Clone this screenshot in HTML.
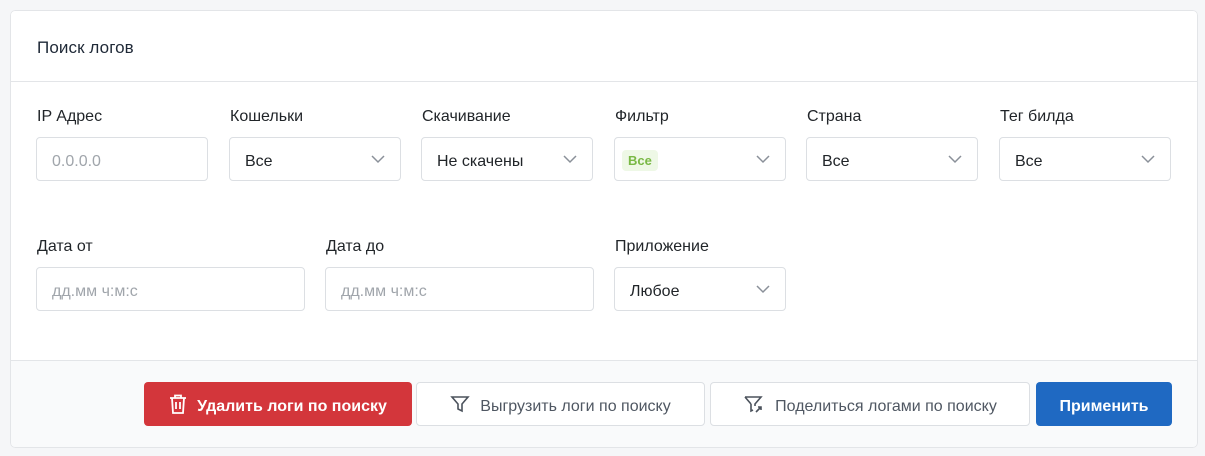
<!DOCTYPE html>
<html><head><meta charset="utf-8"><style>
*{box-sizing:border-box;margin:0;padding:0}
body{width:1205px;height:456px;background:#f5f6f8;font-family:"Liberation Sans",sans-serif;position:relative;overflow:hidden}
.card{position:absolute;left:10px;top:10px;width:1188px;height:438px;background:#fff;border-radius:5px;overflow:hidden}
.bd{position:absolute;inset:0;border:1px solid #e3e5e8;border-radius:5px;pointer-events:none;z-index:5}
.hd{position:absolute;left:0;top:0;right:0;height:72px;border-bottom:1px solid #e3e5e8}
.hd span{position:absolute;left:27px;top:28px;font-size:17px;color:#1f2937;letter-spacing:.1px}
.lbl{position:absolute;font-size:16px;color:#212529}
.in{position:absolute;height:44px;border:1px solid #dcdfe3;border-radius:4px;background:#fff;font-size:16px;color:#212529}
.in span{position:absolute;left:15px;top:15px}
.in .ph{color:#a0a5ab}
.in svg{position:absolute;right:15px;top:17px}
.badge{position:absolute;left:7px;top:12px;background:#eef8e6;color:#79b845;font-size:13px;font-weight:bold;padding:3px 6px;border-radius:4px}
.ft{position:absolute;left:0;right:0;top:350px;bottom:0;background:#f9fafb;border-top:1px solid #e3e5e8}
.btn{position:absolute;top:372px;height:44px;padding-top:5px;border-radius:4px;font-size:16px;font-weight:bold;display:flex;align-items:center;justify-content:center;gap:10px}
.btn svg{margin-top:-5px}
.red{background:#d3363b;color:#fff}
.out{background:#fff;border:1px solid #dcdfe3;color:#4f5762;font-weight:normal}
.blue{background:#1f69c2;color:#fff}
</style></head><body>
<div class="card">
<div class="bd"></div>
<div class="hd"><span>Поиск логов</span></div>
<div class="lbl" style="left:27px;top:98px">IP Адрес</div>
<div class="lbl" style="left:220px;top:98px">Кошельки</div>
<div class="lbl" style="left:412px;top:98px">Скачивание</div>
<div class="lbl" style="left:605px;top:98px">Фильтр</div>
<div class="lbl" style="left:797px;top:98px">Страна</div>
<div class="lbl" style="left:990px;top:98px">Тег билда</div>
<div class="in" style="left:26px;top:127px;width:172px"><span class="ph">0.0.0.0</span></div>
<div class="in" style="left:219px;top:127px;width:172px"><span>Все</span><svg width="14" height="9"><path d="M1 1l6 6 6-6" stroke="#8a9099" fill="none" stroke-width="1.5"/></svg></div>
<div class="in" style="left:411px;top:127px;width:172px"><span>Не скачены</span><svg width="14" height="9"><path d="M1 1l6 6 6-6" stroke="#8a9099" fill="none" stroke-width="1.5"/></svg></div>
<div class="in" style="left:604px;top:127px;width:172px"><div class="badge">Все</div><svg width="14" height="9"><path d="M1 1l6 6 6-6" stroke="#8a9099" fill="none" stroke-width="1.5"/></svg></div>
<div class="in" style="left:796px;top:127px;width:172px"><span>Все</span><svg width="14" height="9"><path d="M1 1l6 6 6-6" stroke="#8a9099" fill="none" stroke-width="1.5"/></svg></div>
<div class="in" style="left:989px;top:127px;width:172px"><span>Все</span><svg width="14" height="9"><path d="M1 1l6 6 6-6" stroke="#8a9099" fill="none" stroke-width="1.5"/></svg></div>
<div class="lbl" style="left:27px;top:228px">Дата от</div>
<div class="lbl" style="left:316px;top:228px">Дата до</div>
<div class="lbl" style="left:605px;top:228px">Приложение</div>
<div class="in" style="left:26px;top:257px;width:269px"><span class="ph">дд.мм ч:м:с</span></div>
<div class="in" style="left:315px;top:257px;width:269px"><span class="ph">дд.мм ч:м:с</span></div>
<div class="in" style="left:604px;top:257px;width:172px"><span>Любое</span><svg width="14" height="9"><path d="M1 1l6 6 6-6" stroke="#8a9099" fill="none" stroke-width="1.5"/></svg></div>
<div class="ft"></div>
<div class="btn red" style="left:134px;width:268px"><svg width="18" height="20" viewBox="0 0 18 20" fill="none" stroke="#fff" stroke-width="1.8"><path d="M1 4h16M6 4V1.5h6V4M3 4l1 15h10l1-15M7 8v7M11 8v7"/></svg>Удалить логи по поиску</div>
<div class="btn out" style="left:406px;width:289px"><svg width="20" height="20" viewBox="0 0 20 20" fill="none" stroke="#4b525c" stroke-width="1.6"><path d="M2 3h16l-6 7v7l-4-2v-5z"/></svg>Выгрузить логи по поиску</div>
<div class="btn out" style="left:700px;width:320px"><svg width="22" height="20" viewBox="0 0 22 20" fill="none" stroke="#4b525c" stroke-width="1.6"><path d="M2 3h16l-6 7v2M8 10v7l2-1M2 3l6 7M13 18l5-5M15 13h3v3"/></svg>Поделиться логами по поиску</div>
<div class="btn blue" style="left:1026px;width:136px">Применить</div>
</div>
</body></html>
